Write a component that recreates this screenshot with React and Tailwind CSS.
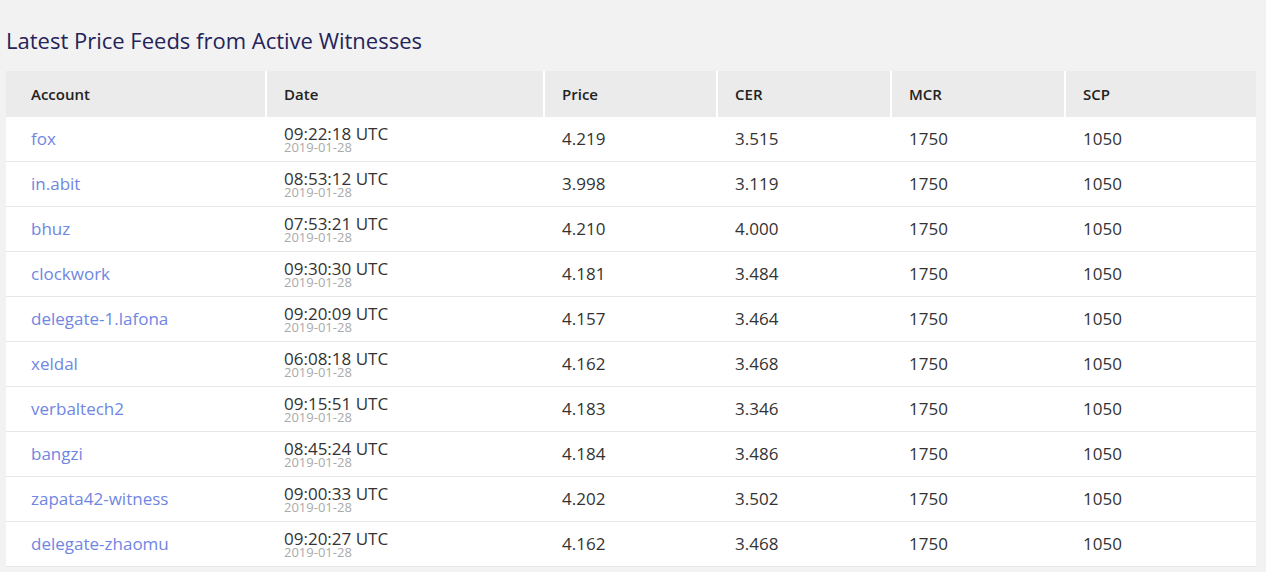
const rows = [
  ["fox", "09:22:18", "4.219", "3.515"],
  ["in.abit", "08:53:12", "3.998", "3.119"],
  ["bhuz", "07:53:21", "4.210", "4.000"],
  ["clockwork", "09:30:30", "4.181", "3.484"],
  ["delegate-1.lafona", "09:20:09", "4.157", "3.464"],
  ["xeldal", "06:08:18", "4.162", "3.468"],
  ["verbaltech2", "09:15:51", "4.183", "3.346"],
  ["bangzi", "08:45:24", "4.184", "3.486"],
  ["zapata42-witness", "09:00:33", "4.202", "3.502"],
  ["delegate-zhaomu", "09:20:27", "4.162", "3.468"],
];

const cols = ["w-[259px]", "w-[278px]", "w-[173px]", "w-[174px]", "w-[174px]", "w-[192px]"];
const heads = ["Account", "Date", "Price", "CER", "MCR", "SCP"];

export default function App() {
  return (
    <div className="w-[1266px] h-[572px] overflow-hidden bg-[#f2f2f2] pt-[26px] pl-[6px] text-[#333]" style={{ fontFamily: '"Open Sans", sans-serif' }}>
      <h2 className="text-[22px] leading-[29px] text-[#24235a] mb-[16px]">Latest Price Feeds from Active Witnesses</h2>
      <div className="w-[1250px]">
        <div className="flex h-[46px] bg-[#ebebeb] items-center">
          {heads.map((h, i) => (
            <div key={h} className={`${cols[i]} h-full flex items-center text-[15px] font-semibold text-[#222] ${i > 0 ? "border-l-2 border-white pl-[17px]" : "pl-[25px]"}`}>
              {h}
            </div>
          ))}
        </div>
        {rows.map((r) => (
          <div key={r[0]} className="flex h-[45px] bg-white border-b border-[#e6e6e6] items-center text-[17px]">
            <div className={`${cols[0]} pl-[25px] text-[#6f86e3]`}>{r[0]}</div>
            <div className={`${cols[1]} pl-[19px] flex flex-col pt-[1px]`}>
              <span className="text-[17px] text-[#333] leading-[15px]">{r[1]} UTC</span>
              <span className="text-[13px] text-[#aaa] leading-[13px]">2019-01-28</span>
            </div>
            <div className={`${cols[2]} pl-[19px]`}>{r[2]}</div>
            <div className={`${cols[3]} pl-[19px]`}>{r[3]}</div>
            <div className={`${cols[4]} pl-[19px]`}>1750</div>
            <div className={`${cols[5]} pl-[19px]`}>1050</div>
          </div>
        ))}
      </div>
    </div>
  );
}
